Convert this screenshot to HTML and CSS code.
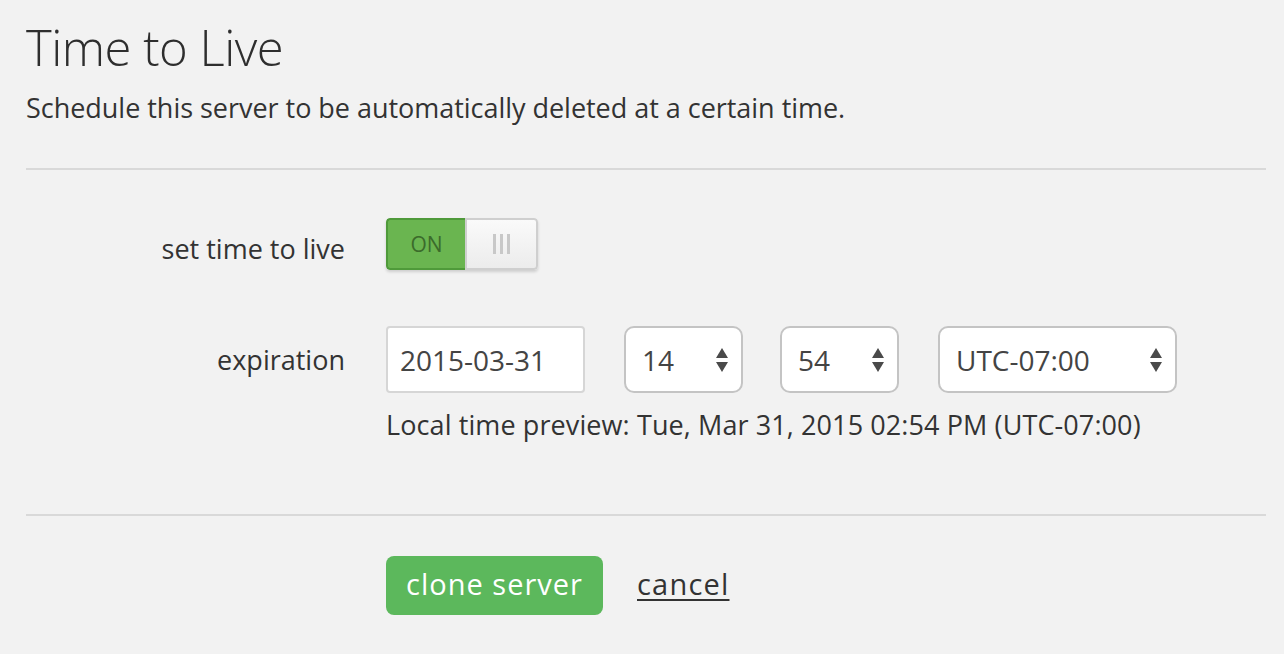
FILE: index.html
```html
<!DOCTYPE html>
<html>
<head>
<meta charset="utf-8">
<link rel="stylesheet" href="styles.css">
</head>
<body>
<div class="page">
  <h1 class="title">Time to Live</h1>
  <p class="sub">Schedule this server to be automatically deleted at a certain time.</p>
  <div class="rule"></div>
  <div class="form">
    <div class="row row-toggle">
      <div class="lbl">set time to live</div>
      <div class="toggle">
        <div class="toggle-on">ON</div>
        <div class="toggle-knob"><span></span><span></span><span></span></div>
      </div>
    </div>
    <div class="row row-exp">
      <div class="lbl">expiration</div>
      <div class="fields">
        <div class="inputs">
          <div class="input date">2015-03-31</div>
          <div class="input sel sel-sm">14<svg class="arr" width="14" height="26" viewBox="0 0 14 26"><path d="M7 1 L13 11 L1 11 Z" fill="#4a4a4a"/><path d="M1 15 L13 15 L7 25 Z" fill="#4a4a4a"/></svg></div>
          <div class="input sel sel-sm">54<svg class="arr" width="14" height="26" viewBox="0 0 14 26"><path d="M7 1 L13 11 L1 11 Z" fill="#4a4a4a"/><path d="M1 15 L13 15 L7 25 Z" fill="#4a4a4a"/></svg></div>
          <div class="input sel sel-lg">UTC-07:00<svg class="arr" width="14" height="26" viewBox="0 0 14 26"><path d="M7 1 L13 11 L1 11 Z" fill="#4a4a4a"/><path d="M1 15 L13 15 L7 25 Z" fill="#4a4a4a"/></svg></div>
        </div>
        <p class="preview">Local time preview: Tue, Mar 31, 2015 02:54 PM (UTC-07:00)</p>
      </div>
    </div>
  </div>
  <div class="rule rule2"></div>
  <div class="actions">
    <button class="btn">clone server</button>
    <a class="cancel" href="#">cancel</a>
  </div>
</div>
</body>
</html>
```
FILE: styles.css
```css
html, body {
  margin: 0;
  padding: 0;
  background: #f2f2f2;
}
body {
  font-family: "Open Sans", "Liberation Sans", sans-serif;
  color: #333;
}
.page {
  padding: 15px 18px 0 26px;
}
.title {
  margin: 0;
  font-size: 49px;
  font-weight: 300;
  line-height: 64px;
  letter-spacing: -0.5px;
  color: #2e2e2e;
}
.sub {
  margin: 11px 0 0;
  font-size: 27px;
  font-weight: 400;
  line-height: 36px;
  letter-spacing: -0.03px;
}
.rule {
  height: 2px;
  background: #d9d9d9;
  margin-top: 42px;
}
.form {
  padding-top: 48px;
}
.row {
  display: flex;
  align-items: flex-start;
}
.lbl {
  width: 319px;
  margin-right: 41px;
  text-align: right;
  font-size: 27px;
  line-height: 36px;
  flex: none;
}
.row-toggle .lbl {
  padding-top: 13px;
}
.toggle {
  display: flex;
  width: 152px;
  height: 52px;
  box-sizing: border-box;
  border-radius: 4px;
  overflow: hidden;
  box-shadow: 0 2px 3px rgba(0,0,0,0.15);
}
.toggle-on {
  width: 79px;
  box-sizing: border-box;
  background: #6ab550;
  border: 2px solid #4f9a3a;
  border-right: none;
  border-radius: 4px 0 0 4px;
  color: #3b6b2b;
  font-size: 21px;
  display: flex;
  align-items: center;
  justify-content: center;
}
.toggle-knob {
  flex: 1;
  box-sizing: border-box;
  background: linear-gradient(#fafafa, #ececec);
  border: 2px solid #cfcfcf;
  border-radius: 0 4px 4px 0;
  display: flex;
  align-items: center;
  justify-content: center;
  gap: 4px;
}
.toggle-knob span {
  width: 3px;
  height: 20px;
  background: #c8c8c8;
}
.row-exp {
  margin-top: 56px;
}
.row-exp .lbl {
  padding-top: 16px;
}
.inputs {
  display: flex;
  gap: 39px;
}
.input {
  height: 67px;
  box-sizing: border-box;
  background: #fff;
  border: 2px solid #d6d6d6;
  border-radius: 4px;
  font-size: 28px;
  display: flex;
  align-items: center;
  padding: 0 12px;
  color: #444;
}
.date {
  width: 199px;
}
.sel {
  border-color: #c4c4c4;
  border-radius: 10px;
  justify-content: space-between;
  padding: 0 12px 0 16px;
}
.sel-sm {
  width: 119px;
}
.sel-sm + .sel-sm {
  margin-left: -2px;
}
.sel-lg {
  width: 239px;
}
.arr {
  display: block;
}
.preview {
  margin: 14px 0 0;
  font-size: 27px;
  line-height: 36px;
  letter-spacing: 0.1px;
}
.rule2 {
  margin-top: 71px;
}
.actions {
  display: flex;
  align-items: center;
  padding-left: 360px;
  padding-top: 40px;
  gap: 34px;
}
.btn {
  width: 217px;
  height: 59px;
  border: none;
  border-radius: 8px;
  background: #5cb85c;
  color: #fff;
  font-family: "Open Sans", "Liberation Sans", sans-serif;
  font-size: 29px;
  letter-spacing: 1px;
  padding: 0 0 4px;
}
.cancel {
  color: #333;
  font-size: 29px;
  letter-spacing: 1.2px;
  text-decoration: underline;
  text-underline-offset: 4px;
  text-decoration-thickness: 2px;
  margin-bottom: 4px;
}
```
